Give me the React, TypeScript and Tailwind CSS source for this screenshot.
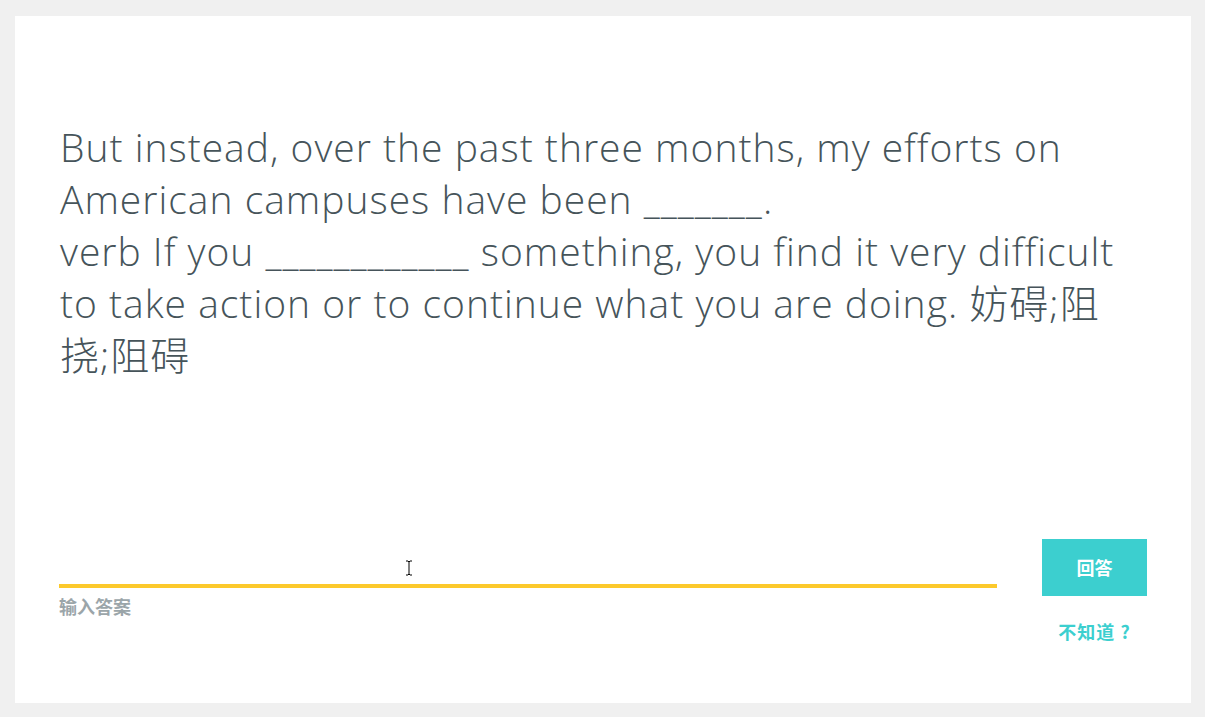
import React from "react";

const App: React.FC = () => {
    return (
        <div className="min-h-screen bg-[#f0f0f0] pt-[16px] pl-[15px] pr-[14px] pb-[14px] font-['Open_Sans','Noto_Sans_CJK_SC',sans-serif]">
            <div className="bg-white h-[687px] w-[1176px] px-[45px] pt-[105px] flex flex-col">
                {/* question */}
                <p className="text-[#46545a] text-[39px] leading-[52px] tracking-[1px] font-light">
                    But instead, over the past three months, my efforts on American campuses have been _______.
                    <br />
                    verb If you ____________ something, you find it very difficult to take action or to continue what you are doing. 妨碍;阻挠;阻碍
                </p>

                {/* answer row */}
                <div className="mt-auto mb-[58px] flex items-start gap-[45px] font-['Noto_Sans_CJK_SC',sans-serif]">
                    <div className="relative flex-1 -ml-[1px]">
                        <div className="h-[50px] border-b-4 border-[#fcc92b]" />
                        <svg className="absolute left-[346px] top-[22px]" width="8" height="16" viewBox="0 0 8 16">
                            <path d="M1 1h2l1 1 1-1h2M4 2v12M1 15h2l1-1 1 1h2" stroke="#000" strokeWidth="1" fill="none" />
                        </svg>
                        <div className="mt-[9px] text-[18px] font-bold text-[#9ba5a9] leading-none">
                            输入答案
                        </div>
                    </div>
                    <div className="flex flex-col items-center w-[105px] mt-[1px] mr-[-1px]">
                        <button className="w-[105px] h-[57px] bg-[#3ccfcf] text-white text-[18px] font-bold">
                            回答
                        </button>
                        <span className="mt-[22px] text-[#3ccfcf] text-[18px] font-bold whitespace-pre tracking-[1px]">
                            不知道 ?
                        </span>
                    </div>
                </div>
            </div>
        </div>
    );
};

export default App;
